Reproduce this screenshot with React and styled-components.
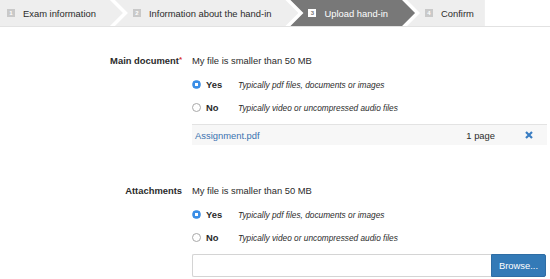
import styled, { createGlobalStyle } from "styled-components";

const GlobalStyle = createGlobalStyle`
  html, body {
    margin: 0;
    padding: 0;
    background: #fff;
  }
  body {
    font-family: "Liberation Sans", Arial, sans-serif;
    color: #2b2b2b;
    -webkit-font-smoothing: antialiased;
  }
`;

const steps = [
  { n: 1, label: "Exam information" },
  { n: 2, label: "Information about the hand-in" },
  { n: 3, label: "Upload hand-in", active: true },
  { n: 4, label: "Confirm" },
];

const sections = [
  { label: "Main document", required: true, file: { name: "Assignment.pdf", pages: "1 page" } },
  { label: "Attachments", required: false, file: null },
];

export default function App() {
  return (
    <Page>
      <GlobalStyle />
      <Steps>
        {steps.map((s, i) => (
          <Step
            key={s.n}
            $active={s.active}
            $first={i === 0}
            $last={i === steps.length - 1}
          >
            <Badge $active={s.active}>{s.n}</Badge>
            {s.label}
          </Step>
        ))}
      </Steps>

      <Form>
        {sections.map((sec) => (
          <Section key={sec.label}>
            <Label>
              {sec.label}
              {sec.required && <Req>*</Req>}
            </Label>
            <Field>
              <Heading>My file is smaller than 50 MB</Heading>
              <Option>
                <Radio $checked />
                <OptLabel>Yes</OptLabel>
                <OptHint>Typically pdf files, documents or images</OptHint>
              </Option>
              <Option>
                <Radio />
                <OptLabel>No</OptLabel>
                <OptHint>Typically video or uncompressed audio files</OptHint>
              </Option>
              {sec.file ? (
                <FileRow>
                  <FileName href="#">{sec.file.name}</FileName>
                  <Pages>{sec.file.pages}</Pages>
                  <Remove>
                    <svg width="8" height="8" viewBox="0 0 8 8">
                      <path
                        d="M1 1 L7 7 M7 1 L1 7"
                        stroke="#3a7dc2"
                        strokeWidth="2.2"
                        strokeLinecap="butt"
                      />
                    </svg>
                  </Remove>
                </FileRow>
              ) : (
                <Upload>
                  <UploadInput />
                  <BrowseButton>Browse...</BrowseButton>
                </Upload>
              )}
            </Field>
          </Section>
        ))}
      </Form>
    </Page>
  );
}

// styles

const Page = styled.div`
  width: 550px;
  height: 279px;
  overflow: hidden;
`;

const Steps = styled.nav`
  display: flex;
  height: 26px;
  border-bottom: 1px solid #e2e2e2;
`;

const Step = styled.div`
  display: flex;
  align-items: center;
  gap: 8px;
  height: 26px;
  padding: 0 ${(p) => (p.$last ? 11 : 27)}px 0 ${(p) => (p.$first ? 7 : 18)}px;
  margin-left: ${(p) => (p.$first ? 0 : -8)}px;
  background: ${(p) => (p.$active ? "#787878" : "#eeeeee")};
  color: ${(p) => (p.$active ? "#fff" : "#2b2b2b")};
  font-size: 9.4px;
  white-space: nowrap;
  clip-path: ${(p) =>
    p.$first
      ? "polygon(0 0, calc(100% - 13px) 0, 100% 50%, calc(100% - 13px) 100%, 0 100%)"
      : p.$last
      ? "polygon(0 0, 100% 0, 100% 100%, 0 100%, 13px 50%)"
      : "polygon(0 0, calc(100% - 13px) 0, 100% 50%, calc(100% - 13px) 100%, 0 100%, 13px 50%)"};
`;

const Badge = styled.span`
  display: inline-flex;
  align-items: center;
  justify-content: center;
  width: 8px;
  height: 8px;
  font-size: 6px;
  font-weight: bold;
  background: ${(p) => (p.$active ? "#fff" : "#c9c9c9")};
  color: ${(p) => (p.$active ? "#787878" : "#fff")};
`;

const Form = styled.main`
  display: flex;
  flex-direction: column;
  gap: 39px;
  padding: 27px 3px 0 0;
`;

const Section = styled.section`
  display: grid;
  grid-template-columns: 182px 1fr;
  column-gap: 10px;
  align-items: start;
`;

const Label = styled.div`
  text-align: right;
  font-weight: bold;
  font-size: 9.4px;
  line-height: 14px;
`;

const Req = styled.span`
  color: #d9342b;
  font-size: 8px;
  font-weight: bold;
  vertical-align: top;
  line-height: 11px;
`;

const Field = styled.div`
  display: flex;
  flex-direction: column;
`;

const Heading = styled.div`
  font-size: 9.4px;
  line-height: 14px;
  margin-bottom: 5px;
`;

const Option = styled.label`
  display: flex;
  align-items: center;
  height: 23px;
`;

const Radio = styled.span`
  box-sizing: border-box;
  width: 9px;
  height: 9px;
  border-radius: 50%;
  margin-right: 5px;
  flex: none;
  background: ${(p) =>
    p.$checked
      ? "radial-gradient(circle, #fff 0 1.5px, #3a8ee6 2px)"
      : "#fff"};
  border: 1px solid ${(p) => (p.$checked ? "#3a8ee6" : "#a9a9a9")};
`;

const OptLabel = styled.span`
  width: 32px;
  font-weight: bold;
  font-size: 9.4px;
`;

const OptHint = styled.span`
  font-style: italic;
  font-size: 8.3px;
`;

const FileRow = styled.div`
  display: flex;
  align-items: center;
  height: 20px;
  margin-top: 5px;
  padding: 0 14px 0 3px;
  border-top: 1px solid #e3e3e3;
  background: #f7f7f7;
  font-size: 9.4px;
`;

const FileName = styled.a`
  flex: 1;
  color: #3a72b0;
  text-decoration: none;
`;

const Pages = styled.span``;

const Remove = styled.span`
  display: flex;
  margin-left: 30px;
`;

const Upload = styled.div`
  display: flex;
  height: 23px;
  margin-top: 5px;
  margin-right: 1px;
`;

const UploadInput = styled.div`
  flex: 1;
  box-sizing: border-box;
  border: 1px solid #d4d4d4;
  border-right: none;
  border-radius: 2px 0 0 2px;
  background: #fff;
`;

const BrowseButton = styled.button`
  width: 55px;
  border: 1px solid #2e6da4;
  border-radius: 0 2px 2px 0;
  background: #337ab7;
  color: #fff;
  font-family: "Liberation Sans", Arial, sans-serif;
  font-size: 9.4px;
  padding: 0;
`;
